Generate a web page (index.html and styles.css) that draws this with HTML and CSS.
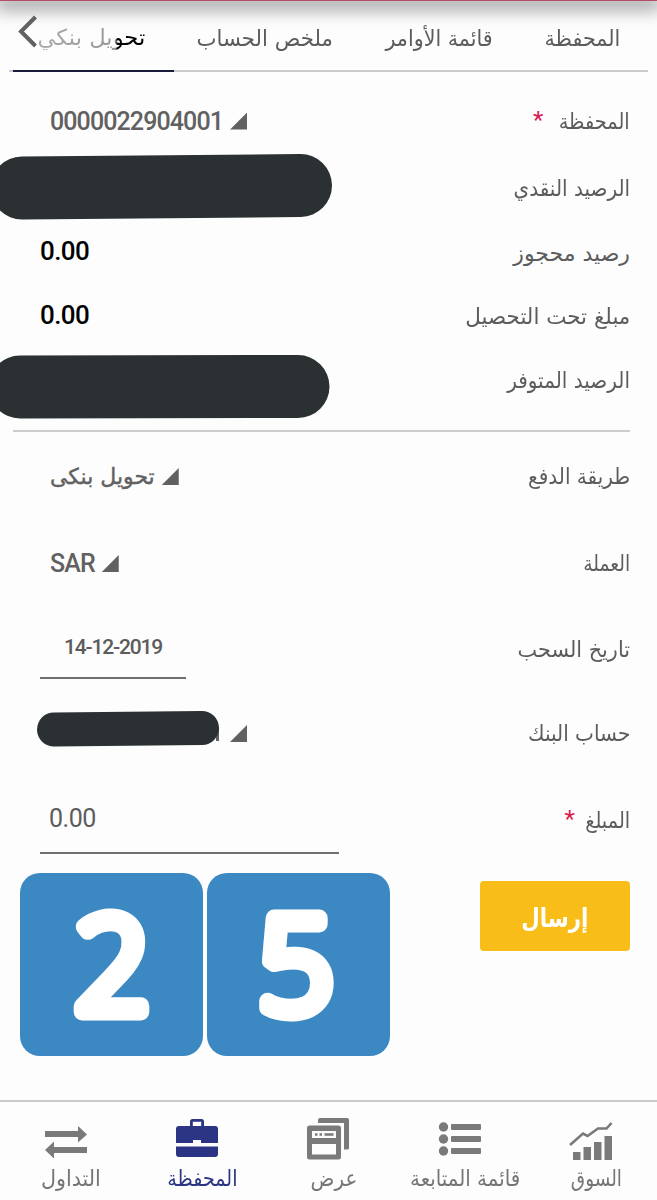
FILE: index.html
```html
<!DOCTYPE html>
<html lang="ar" dir="rtl">
<head>
  <meta charset="utf-8" />
  <title>تحويل بنكي</title>
  <link rel="stylesheet" href="styles.css">
</head>
<body>
  <header class="topbar"></header>

  <nav class="tabs">
    <a class="tab tab-portfolio"><span>المحفظة</span></a>
    <a class="tab tab-orders"><span>قائمة الأوامر</span></a>
    <a class="tab tab-summary"><span>ملخص الحساب</span></a>
    <a class="tab tab-transfer active"><span>تحويل بنكي</span></a>
    <svg class="back" width="20" height="34" viewBox="0 0 20 34"><path d="M17.500 2L3 16.500L17.500 31" fill="none" stroke="#616161" stroke-width="4"/></svg>
  </nav>

  <main class="form">
    <div class="row r-portfolio">
      <label><span>المحفظة</span><b class="req">*</b></label>
      <div class="select"><span class="num">0000022904001</span><i class="arrow"></i></div>
    </div>
    <div class="row r-cash">
      <label><span>الرصيد النقدي</span></label>
      <svg class="mask" width="334" height="66"><path d="M22 34L300.500 31.500"/></svg>
    </div>
    <div class="row r-held">
      <label><span>رصيد محجوز</span></label>
      <div class="amount">0.00</div>
    </div>
    <div class="row r-pending">
      <label><span>مبلغ تحت التحصيل</span></label>
      <div class="amount">0.00</div>
    </div>
    <div class="row r-available">
      <label><span>الرصيد المتوفر</span></label>
      <svg class="mask" width="334" height="66"><path d="M20 33L298 32.500"/></svg>
    </div>
    <hr>
    <div class="row r-method">
      <label><span>طريقة الدفع</span></label>
      <div class="select"><span class="ar">تحويل بنكى</span><i class="arrow"></i></div>
    </div>
    <div class="row r-currency">
      <label><span>العملة</span></label>
      <div class="select"><span class="num">SAR</span><i class="arrow"></i></div>
    </div>
    <div class="row r-date">
      <label><span>تاريخ السحب</span></label>
      <div class="date">14-12-2019</div>
    </div>
    <div class="row r-bank">
      <label><span>حساب البنك</span></label>
      <div class="select bank">
        <svg class="mask small" width="184" height="38"><path d="M181.500 17V31" class="digit"/><path d="M18 19.500L166 18"/></svg>
        <i class="arrow"></i>
      </div>
    </div>
    <div class="row r-amount">
      <label><span>المبلغ</span><b class="req">*</b></label>
      <div class="field">0.00</div>
    </div>
  </main>

  <section class="actions">
    <button class="send"><span>إرسال</span></button>
    <div class="tiles">
      <svg class="tile" width="183" height="183" viewBox="0 0 183 183"><text x="92.500" y="139">2</text></svg>
      <svg class="tile" width="183" height="183" viewBox="0 0 183 183"><text x="89" y="139">5</text></svg>
    </div>
  </section>

  <footer class="bottom">
    <a class="item n-market">
      <svg width="44" height="44" viewBox="0 0 44 44"><path d="M4 35h7.500v8H4zM14.500 30H22v13h-7.500zM25 25h7.500v18H25zM35.500 19H43v24h-7.500z" fill="#7a7a7a"/><path d="M1 28L14 16.500l4.500 2.500L29 11.500h8.500L42.500 6" fill="none" stroke="#7a7a7a" stroke-width="2.600"/></svg>
      <span>السوق</span>
    </a>
    <a class="item n-watch">
      <svg width="44" height="44" viewBox="0 0 44 44"><g fill="#7a7a7a"><circle cx="5.500" cy="10" r="4.700"/><circle cx="5.500" cy="22" r="4.700"/><circle cx="5.500" cy="34" r="4.700"/><rect x="13" y="7" width="30" height="6" rx="1"/><rect x="13" y="19" width="30" height="6" rx="1"/><rect x="13" y="31" width="30" height="6" rx="1"/></g></svg>
      <span>قائمة المتابعة</span>
    </a>
    <a class="item n-view">
      <svg width="44" height="44" viewBox="0 0 44 44"><path d="M12 5V3q0-2 2-2h27q2 0 2 2v28q0 1.500-1.500 1.500H38V6H12z" fill="#7a7a7a"/><path d="M3.500 8.500h29q2.500 0 2.500 2.500v29q0 2.500-2.500 2.500h-29Q1 42.500 1 40V11q0-2.500 2.500-2.500zM6 14v7h24v-7zM6 27v10.500h24V27z" fill="#7a7a7a" fill-rule="evenodd"/><path d="M9 17.500h2.500M13.500 17.500H16M18.500 17.500h9" stroke="#7a7a7a" stroke-width="2.500"/></svg>
      <span>عرض</span>
    </a>
    <a class="item n-wallet selected">
      <svg width="44" height="44" viewBox="0 0 44 44"><path d="M15 10V4.500Q15 2 17.500 2h9Q29 2 29 4.500V10M17.800 10h8.400V4.800h-8.400z" fill="#2b3583" fill-rule="evenodd"/><path d="M4 9h36q3 0 3 3v14H26v-3h-8v3H1V12q0-3 3-3zM1 29.500h42V37q0 3-3 3H4q-3 0-3-3z" fill="#2b3583"/></svg>
      <span>المحفظة</span>
    </a>
    <a class="item n-trade">
      <svg width="44" height="44" viewBox="0 0 44 44"><path d="M1 14h33V9l9 8.500-9 8V20H1zM43 30H10v-5.500l-9 8.500 9 8.500V36h33z" fill="#7a7a7a"/></svg>
      <span>التداول</span>
    </a>
  </footer>
</body>
</html>
```
FILE: styles.css
```css
* {
  box-sizing: border-box;
}
body {
  margin: 0;
  height: 1200px;
  display: flex;
  flex-direction: column;
  overflow: hidden;
  background: #fdfdfd;
  color: #5c5c5c;
  font-family: 'DejaVu Sans', sans-serif;
  font-size: 22px;
  white-space: nowrap;
}
.topbar {
  height: 1px;
  flex: none;
  background: #b34d68;
  box-shadow: 0 2px 18px 5px rgba(0,0,0,0.5);
}

/* tabs */
.tabs {
  position: relative;
  display: flex;
  flex: none;
  height: 71px;
  margin: 0 9px;
  padding-right: 6px;
  border-bottom: 2px solid #cbcbcb;
}
.tab {
  display: flex;
  align-items: center;
  justify-content: center;
  height: 71px;
  padding-top: 3px;
}
.tab span {
  transform: scaleX(0.94);
}
.tab-portfolio { width: 120px; }
.tab-orders { width: 166px; }
.tab-summary { width: 182px; }
.tab-transfer { width: 161px; padding-right: 5px; }
.tab-summary span { transform: scaleX(0.965); }
.tab-transfer span { transform: scaleX(1.03); }
.tab.active {
  border-bottom: 2px solid #191a3c;
}
.tab.active span {
  background: linear-gradient(90deg, #aaa 0, #999 72%, #000 74%);
  -webkit-background-clip: text;
  background-clip: text;
  color: transparent;
}
.back {
  position: absolute;
  left: 9px;
  top: 14px;
}

/* form */
.form {
  flex: none;
  height: 788px;
  padding: 16px 27px 0 0;
}
.row {
  display: flex;
  justify-content: space-between;
  align-items: center;
}
.row label {
  display: flex;
}
.row label span {
  transform: scaleX(0.91);
  transform-origin: right;
}
.r-portfolio { height: 66px; }
.r-cash { height: 66px; }
.r-held { height: 63px; }
.r-pending { height: 64px; }
.r-available { height: 74px; }
.r-method { height: 87px; }
.r-currency { height: 87px; }
.r-date { height: 84px; }
.r-bank { height: 85px; }
.r-amount { height: 88px; }
.r-portfolio label span { transform: scaleX(0.88); }
.r-cash label { padding-top: 2px; }
.r-held label { padding-top: 4px; }
.r-held label span { transform: none; }
.r-pending label { padding-top: 2px; }
.r-pending label span { transform: scaleX(0.975); }
.r-available label { padding-bottom: 8px; }
.r-currency label span { transform: scaleX(0.85); }
.r-date label span { transform: scaleX(0.945); }
.r-amount label span { transform: scaleX(0.88); }
hr {
  height: 2px;
  margin: 9px 0 1px 13px;
  border: 0;
  background: #cdcdcd;
}
.req {
  margin-right: 4px;
  color: #d81b52;
  font: 400 24px/22px Roboto, sans-serif;
}
.r-portfolio .req {
  margin-right: 6px;
}
.select {
  direction: ltr;
  display: flex;
  align-items: center;
  margin-left: 50px;
  flex: 1;
  color: #616161;
}
.num {
  font: 500 25px Roboto, sans-serif;
  letter-spacing: -0.9px;
}
.ar {
  -webkit-text-stroke: 0.4px #616161;
}
.arrow {
  width: 17px;
  height: 17px;
  margin-left: 7px;
  background: #616161;
  clip-path: polygon(100% 0, 100% 100%, 0 100%);
}
.mask path {
  fill: none;
  stroke: #2b3033;
  stroke-width: 63px;
  stroke-linecap: round;
}
.r-available .mask {
  margin-top: 5px;
}
.mask.small path {
  stroke-width: 34px;
}
.mask.small .digit {
  stroke: #616161;
  stroke-width: 3px;
  stroke-linecap: butt;
}
.amount {
  width: 60px;
  margin: 0 0 1px 40px;
  direction: ltr;
  color: #000;
  font: 500 26px Roboto, sans-serif;
  letter-spacing: -0.6px;
}
.bank {
  margin-left: 36px;
}
.bank .mask {
  margin-bottom: 10px;
}
.bank .arrow {
  margin-left: 10px;
}
.date {
  align-self: flex-end;
  width: 146px;
  height: 47px;
  margin: 0 0 12px 40px;
  border-bottom: 2px solid #707070;
  direction: ltr;
  text-align: center;
  font: 500 21px/30px Roboto, sans-serif;
  letter-spacing: -1.2px;
}
.field {
  align-self: flex-end;
  width: 299px;
  height: 50px;
  margin: 0 0 10px 40px;
  padding-left: 9px;
  border-bottom: 2px solid #707070;
  direction: ltr;
  font: 400 25px/30px Roboto, sans-serif;
  letter-spacing: -0.5px;
}

/* send button and number tiles */
.actions {
  display: flex;
  justify-content: space-between;
  flex: none;
  height: 240px;
  padding: 13px 27px 0 20px;
}
.send {
  width: 150px;
  height: 70px;
  margin-top: 8px;
  padding: 4px 0 0;
  border: 0;
  border-radius: 4px;
  background: #f8bd18;
  color: #fff;
  font-family: inherit;
  font-weight: 700;
  font-size: 26px;
}
.send span {
  display: inline-block;
  transform: scaleX(0.82);
}
.tiles {
  display: flex;
  gap: 4px;
  direction: ltr;
}
.tile {
  overflow: visible;
  border-radius: 20px;
  background: #3b88c3;
}
.tile text {
  font: 300 131px 'Open Sans', sans-serif;
  text-anchor: middle;
  fill: #fff;
  stroke: #fff;
  stroke-width: 17px;
  stroke-linejoin: round;
}

/* bottom navigation */
.bottom {
  display: flex;
  flex: none;
  height: 100px;
  border-top: 2px solid #c9c9c9;
  color: #757575;
}
.item {
  flex: 1 0 0;
  min-width: 0;
  display: flex;
  flex-direction: column;
  align-items: center;
  padding-top: 15px;
}
.item svg {
  flex: none;
}
.item span {
  margin-left: 10px;
  line-height: 36px;
  transform: scaleX(0.9);
}
.n-market span { transform: scaleX(0.84); }
.n-wallet span { transform: scaleX(0.87); }
.n-trade span { transform: scaleX(0.94); }
.item.selected {
  color: #2b3583;
}
```
